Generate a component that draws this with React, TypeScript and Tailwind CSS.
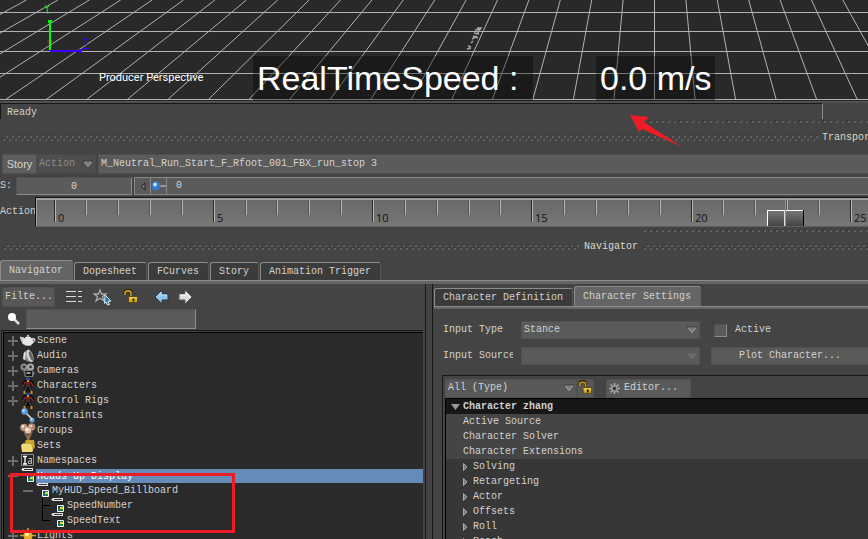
import type { ReactNode } from 'react'
import clsx from 'clsx'

const sceneRows = [
  { label: 'Scene', icon: 'teapot', depth: 0, toggle: 'plus' },
  { label: 'Audio', icon: 'audio', depth: 0, toggle: 'plus' },
  { label: 'Cameras', icon: 'camera', depth: 0, toggle: 'plus' },
  { label: 'Characters', icon: 'character', depth: 0, toggle: 'plus' },
  { label: 'Control Rigs', icon: 'character', depth: 0, toggle: 'plus' },
  { label: 'Constraints', icon: 'constraint', depth: 0 },
  { label: 'Groups', icon: 'group', depth: 0 },
  { label: 'Sets', icon: 'set', depth: 0 },
  { label: 'Namespaces', icon: 'namespace', depth: 0, toggle: 'plus' },
  { label: 'Heads Up Display', icon: 'hud', depth: 0, toggle: 'minus', selected: true },
  { label: 'MyHUD_Speed_Billboard', icon: 'hud', depth: 1, toggle: 'minus' },
  { label: 'SpeedNumber', icon: 'hud', depth: 2 },
  { label: 'SpeedText', icon: 'hud', depth: 2 },
  { label: 'Lights', icon: 'light', depth: 0, toggle: 'plus' }
]

const indents = ['w-1', 'w-[19px]', 'w-[34px]']

const icons: Record<string, ReactNode> = {
  teapot: (
    <>
      <path d="M0 4l4 1 1 6-2 0zM12 5.500c4-1 4 3 0 5" fill="#d8d8d8" stroke="#c8c8c8" />
      <path d="M12.500 6.500c2 0 1 2 0 2.500z" fill="#2a2a2a" />
      <ellipse cx="8" cy="8.5" rx="5" ry="4.5" fill="#e6e6e6" />
      <path d="M4 11c2 2 6 2 8 0l-1 2H5z" fill="#8c8c8c" />
      <path d="M5 5c1-2 5-2 6 0z" fill="#fff" />
      <circle cx="8" cy="2.8" r="1" fill="#ddd" />
    </>
  ),
  audio: (
    <>
      <path d="M3 11l1-7 5-3 4 11-4 2z" fill="#8a8a8a" />
      <ellipse cx="10" cy="8" rx="3" ry="6.4" fill="#d9d9d9" transform="rotate(-20 10 8)" />
      <ellipse cx="11" cy="8" rx="1.6" ry="5" fill="#666" transform="rotate(-20 11 8)" />
      <path d="M3 11l1-7 2 1-1 7z" fill="#ddd" />
    </>
  ),
  camera: (
    <>
      <circle cx="4" cy="4" r="3.6" fill="#8b8b8b" />
      <circle cx="10.5" cy="4" r="3.6" fill="#aaa" />
      <circle cx="4" cy="4" r="1.4" fill="#333" />
      <circle cx="10.5" cy="4" r="1.4" fill="#333" />
      <path d="M3 7h9l3 3-2 4H5z" fill="#777" />
      <path d="M5 8h7v5H6z" fill="#111" />
      <path d="M6.500 9h4v2h-4z" fill="#999" />
    </>
  ),
  character: (
    <>
      <path d="M8 3v6M3 7l2-3h6l2 3M7 9l-2 5M9 9l2 5" fill="none" stroke="#0c0c0c" strokeWidth="3.500" />
      <path d="M6 4h4v5H6z" fill="#5b2222" />
      <path d="M3 8l2-3.500h6L13 8" fill="none" stroke="#8c2424" strokeWidth="1.300" />
      <path d="M6.500 9.500l-2 4M9.500 9.500l2 4" fill="none" stroke="#484848" strokeWidth="1.500" />
      <path d="M6.500 0h3v2.500h-3z" fill="#2447e0" />
      <path d="M7 2h2v2H7zM3.500 13h2v3h-2zM10.500 13h2v3h-2z" fill="#d08a1c" />
    </>
  ),
  constraint: (
    <>
      <path d="M5 4l7 7" stroke="#ddd" strokeWidth="1.6" />
      <circle cx="4.500" cy="3.500" r="3.2" fill="#5c9fdd" />
      <circle cx="3.500" cy="2.500" r="1.3" fill="#bfe0fa" />
      <circle cx="12" cy="12" r="2.6" fill="#5c9fdd" />
      <circle cx="11.500" cy="11.300" r="1" fill="#d2eafc" />
    </>
  ),
  group: (
    <>
      <circle cx="4" cy="4.500" r="3.800" fill="#b8937a" />
      <circle cx="11.500" cy="4" r="3.800" fill="#b08a70" />
      <path d="M3 8l5 4 5-4-3 8H7z" fill="#8a6750" />
      <circle cx="8" cy="7.500" r="3.300" fill="#dcc0aa" />
      <circle cx="7" cy="6.500" r="1.400" fill="#fff3e6" />
      <circle cx="3" cy="3.500" r="1.400" fill="#f5dfd0" />
      <circle cx="11" cy="3" r="1.300" fill="#f0d8c6" />
    </>
  ),
  set: (
    <>
      <path d="M5 3l3-2 2 1h4l1 7-3 4H6z" fill="#c9a533" />
      <path d="M1 7l3-2 2 1h5l2 7-1 1H2z" fill="#f2d977" />
    </>
  ),
  namespace: (
    <>
      <path d="M1.500 1.500h12v11h-12z" fill="#242424" stroke="#8d8d8d" />
      <path d="M3 3.500h4M5 3.500v7M3 11h4" stroke="#fff" strokeWidth="1.300" fill="none" />
      <path d="M8.500 5.500h3v5h-3v-2.500h3" stroke="#bbb" fill="none" />
    </>
  ),
  hud: (
    <>
      <path d="M1 1.500L3 0h10v3H3z" fill="#e6e6e6" />
      <path d="M4 1.500h8" stroke="#333" />
      <path d="M7.500 7.500h6v6h-6z" fill="#159326" stroke="#fff" />
      <path d="M8 8h3v2H8z" fill="#1b3cb8" />
      <path d="M10 9h3v2h-3z" fill="#e6d933" />
      <path d="M8 11h2v2H8z" fill="#275db5" />
    </>
  ),
  light: (
    <>
      <path d="M8 0v15M0 7.500h16M2.500 2l11 11M13.500 2l-11 11" stroke="#d99b1a" strokeWidth="1.600" />
      <circle cx="8" cy="7.500" r="4.500" fill="#e5ad28" />
      <circle cx="7" cy="6.500" r="2" fill="#fff2a8" />
    </>
  )
}

const groups = ['Solving', 'Retargeting', 'Actor', 'Offsets', 'Roll', 'Reach']

function Grid() {
  const spokes = Array.from({ length: 81 }, (_, i) => i - 40)
  return (
    <svg className="block w-full h-[101px]" aria-hidden="true">
      <g stroke="#b2b2b2" fill="none">
        {spokes.map((n) => (
          <line key={n} x1={654.5 + n * 31.4} y1="0" x2={654.5 + n * 40.6} y2="100" />
        ))}
        {[12.5, 31.5, 51.5, 73.5, 99.5].map((y) => (
          <line key={y} x1="0" y1={y} x2="100%" y2={y} shapeRendering="crispEdges" />
        ))}
      </g>
      <path d="M467 49l4-1M468 46l3 1M471 43l2-2M472 39l5-3M473 36l5 2M474 33l5 1M475 30l6-1M477 28h5M478 33l2-5" stroke="#a8a8a8" strokeWidth="1.500" />
      <path d="M50 20v30" stroke="#0f0" strokeWidth="2" />
      <path d="M48 20h4v3h-4z" fill="#0f0" />
      <path d="M45 5l2 3 2-2M47 8l1 6" stroke="#0f0" fill="none" />
      <path d="M48 40v3M51.500 40v3" stroke="#e01010" />
      <path d="M50 51h32" stroke="#3c00ff" strokeWidth="2" />
      <path d="M79 49h3v4h-3z" fill="#3c00ff" />
      <path d="M82.500 39.500h6M83 40l5 7M82 48.500h7" stroke="#3c00ff" fill="none" />
    </svg>
  )
}

function Grip({ id, double }: { id: string; double?: boolean }) {
  return (
    <svg className={clsx('block w-full', double ? 'h-[6px]' : 'h-[3px]')} aria-hidden="true">
      <pattern id={id} width="6" height="6" patternUnits="userSpaceOnUse">
        <path d="M3 0h2v2H3zM0 3h2v2H0z" fill="#383838" />
        <path d="M4 1h2v2H4zM1 4h2v2H1z" fill="#606060" />
      </pattern>
      <rect width="100%" height="100%" fill={`url(#${id})`} />
    </svg>
  )
}

function Chevron({ dim }: { dim?: boolean }) {
  return (
    <svg className="pointer-events-none absolute right-[3px] top-1/2 -translate-y-1/2" width="10" height="7" aria-hidden="true">
      <path d="M1 1h8L5 6z" fill={dim ? '#666' : '#777'} stroke={dim ? '#777' : '#aaa'} />
      <path d="M0 .500h10" stroke={dim ? '#555' : '#222'} />
    </svg>
  )
}

function Lock() {
  return (
    <svg width="16" height="16" viewBox="0 0 16 16" aria-hidden="true">
      <path d="M2 6V4c0-4 6-4 6 0v4" fill="none" stroke="#2d2205" strokeWidth="3" />
      <path d="M2 6V4c0-3 6-3 6 0v4" fill="none" stroke="#d7a91e" strokeWidth="1.500" />
      <path d="M5.500 7.500h9v6h-9z" fill="#d5ad22" stroke="#5d4508" />
      <path d="M6 8h8v2H6z" fill="#ebcb4d" />
      <path d="M9.500 9.500h2v3h-2z" fill="#332500" />
    </svg>
  )
}

function Ruler() {
  const ticks = Array.from({ length: 27 }, (_, i) => ({ n: i, x: Math.round(18.5 + i * 31.85) }))
  return (
    <div className="relative flex-1 h-[30px] border-t border-l border-[#111] border-b border-b-[#606060] bg-linear-to-b from-[#686868] to-[#777]">
      <svg className="block w-full h-full" aria-hidden="true">
        <path d="M.500 0v30" stroke="#a0a0a0" />
        <rect width="100%" height="2" fill="#a0a0a0" />
        {ticks.map(({ n, x }) => (
          <g key={n} shapeRendering="crispEdges">
            <rect x={x - 1} y="2" width="1" height={n % 5 ? 15 : 22} fill={n % 5 ? '#555' : '#2b2b2b'} />
            <rect x={x} y="2" width="1" height={n % 5 ? 15 : 22} fill="#b5b5b5" />
            {n % 5 === 0 && (
              <text x={x + 3} y="24" fill="#111" className="text-[11px] font-['Open_Sans',sans-serif]">
                {n}
              </text>
            )}
          </g>
        ))}
        <defs>
          <linearGradient id="thumb" x1="0" y1="0" x2="0" y2="1">
            <stop offset="0" stopColor="#777" />
            <stop offset="1" stopColor="#444" />
          </linearGradient>
        </defs>
        <g shapeRendering="crispEdges">
          <rect x="731" y="12" width="37" height="17" fill="#000" />
          <rect x="731" y="12" width="36" height="16" fill="#fff" />
          <rect x="732" y="13" width="35" height="15" fill="url(#thumb)" />
          <rect x="748" y="13" width="1" height="15" fill="#ddd" />
          <rect x="749" y="0" width="1" height="28" fill="#20e020" />
        </g>
      </svg>
    </div>
  )
}

function Tab({ label, active }: { label: string; active?: boolean }) {
  return (
    <button
      type="button"
      role="tab"
      aria-selected={!!active}
      className={clsx(
        'rounded-t-[3px] border-t border-l',
        active
          ? 'h-5 pl-2 pr-[10px] border-[#8c8c8c] bg-[#656565]'
          : 'h-[18px] pl-2 pr-[9px] border-[#8c8c8c] border-r border-r-[#555] bg-[#3b3b3b]'
      )}
    >
      {label}
    </button>
  )
}

function Navigator() {
  return (
    <section className="flex-1 min-w-0 flex flex-col border-r border-[#181818]">
      <div className="flex items-center h-[23px] mt-px pl-[2px] shrink-0">
        <button type="button" className="w-[53px] h-5 text-left pl-[2px] bg-[#585858] border border-[#4e4e4e]">Filte...</button>
        <button type="button" aria-label="List" className="ml-[10px]">
          <svg width="18" height="14" aria-hidden="true">
            <path d="M1 1.500h10M13 1.500h4M1 6.500h10M13 6.500h4M1 11.500h10M13 11.500h4" stroke="#ddd" />
          </svg>
        </button>
        <button type="button" aria-label="Favorites" className="ml-[10px]">
          <svg width="20" height="18" aria-hidden="true">
            <path d="M7 2l1.500 4H13l-3.500 2.500L11 13l-4-2.700L3 13l1.500-4.500L1 6h4.500z" fill="#444" stroke="#aaa" strokeWidth="1.300" />
            <path d="M12 7l6 6-3 .500 1.500 3-2 .500-1.500-3-1.500 1.500z" fill="#2681a8" stroke="#d6edf5" />
          </svg>
        </button>
        <button type="button" aria-label="Lock selection" className="ml-[10px]"><Lock /></button>
        <button type="button" aria-label="Back" className="ml-[15px]">
          <svg width="15" height="16" aria-hidden="true">
            <path d="M1 8l7-7v4h6v6H8v4z" fill="#8cc4ed" stroke="#25394a" />
            <path d="M2.500 8L7 3.500V6h6" fill="none" stroke="#c5e5fa" />
          </svg>
        </button>
        <button type="button" aria-label="Forward" className="ml-[9px]">
          <svg width="15" height="16" aria-hidden="true">
            <path d="M14 8L7 1v4H1v6h6v4z" fill="#ddd" stroke="#555" />
            <path d="M12.500 8L8 3.500V6H2" fill="none" stroke="#fff" />
          </svg>
        </button>
      </div>
      <div className="flex items-center h-[21px] pl-[7px] shrink-0">
        <label htmlFor="find" aria-label="Find" className="w-[19px]">
          <svg width="14" height="14" aria-hidden="true">
            <path d="M7 7l5 5" stroke="#ddd" strokeWidth="2.500" />
            <circle cx="5" cy="5" r="4" fill="#fff" />
          </svg>
        </label>
        <input id="find" className="w-[170px] h-5 px-1 bg-[#5a5a5a] border border-[#505050] border-r-[#8c8c8c] border-b-[#8c8c8c] outline-none" />
      </div>
      <div className="flex-1 min-h-0 mt-px ml-px mr-[2px] border-t border-l border-[#181818] pt-px pl-px">
        <ul className="h-full overflow-hidden border-t border-l border-black bg-[#2a2a2a]">
          {sceneRows.map((row) => (
            <li key={row.label} className="relative flex items-center h-[15px]">
              <span className={clsx('shrink-0', indents[row.depth])} />
              <span className="w-3 shrink-0">
                {row.toggle && (
                  <svg width="11" height="11" className="block" aria-hidden="true">
                    <path d={row.toggle === 'plus' ? 'M0 6h10M5 1v10' : 'M0 6h10'} stroke="#6c6c6c" strokeWidth="2" />
                  </svg>
                )}
                {row.depth === 2 && (
                  <svg width="12" height="15" className="block" aria-hidden="true">
                    <path d={row.label === 'SpeedText' ? 'M4.500 0v7.500H12' : 'M4.500 0v15M4.500 7.500H12'} stroke="#000" fill="none" />
                  </svg>
                )}
              </span>
              <svg width="16" height="16" viewBox="0 0 16 16" className="shrink-0" aria-hidden="true">
                {icons[row.icon]}
              </svg>
              <span className={clsx('flex-1 pl-px leading-[15px]', row.selected && 'h-[14px] bg-[#658bb8] text-white')}>{row.label}</span>
            </li>
          ))}
        </ul>
      </div>
    </section>
  )
}

function CharacterSettings() {
  return (
    <section className="w-[calc(50%+2px)] min-w-0 ml-[6px] pl-px flex flex-col border-l border-[#181818]">
      <div role="tablist" className="flex items-end gap-px mt-[2px] border-b border-[#8c8c8c] shrink-0">
        <Tab label="Character Definition" />
        <Tab label="Character Settings" active />
      </div>
      <div className="h-[2px] shrink-0 bg-[#656565]" />
      <div className="flex items-center h-[18px] mt-3 pl-[9px] shrink-0">
        <label htmlFor="input-type" className="w-[78px]">Input Type</label>
        <div className="relative">
          <select id="input-type" className="appearance-none block w-[179px] h-[18px] pl-[2px] bg-[#5a5a5a] border border-[#515151]">
            <option>Stance</option>
          </select>
          <Chevron />
        </div>
        <label className="flex items-center ml-[14px] gap-2">
          <input type="checkbox" className="appearance-none size-[13px] bg-[#5a5a5a] border border-[#515151] border-r-[#8c8c8c] border-b-[#8c8c8c]" />
          Active
        </label>
      </div>
      <div className="flex items-center h-[18px] mt-2 pl-[9px] shrink-0">
        <label htmlFor="input-source" className="w-[70px] mr-2 overflow-hidden whitespace-nowrap">Input Source</label>
        <div className="relative mr-[11px]">
          <select id="input-source" disabled className="appearance-none block w-[179px] h-[18px] bg-[#5a5a5a] border border-[#515151]" />
          <Chevron dim />
        </div>
        <button type="button" className="flex-1 h-[18px] bg-[#5a5a5a] border border-r-0 border-[#515151]">Plot Character...</button>
      </div>
      <div className="flex-1 min-h-0 mt-[10px] ml-2 pl-[2px] border-t border-l border-[#181818] flex flex-col">
        <div className="flex items-center h-5 mt-[2px] shrink-0">
          <div className="relative">
            <select aria-label="Property filter" className="appearance-none block w-[132px] h-[19px] pl-[2px] bg-[#585858] border border-[#515151]">
              <option>All (Type)</option>
            </select>
            <Chevron />
          </div>
          <button type="button" aria-label="Lock character" className="flex items-center justify-center w-[17px] h-[19px] bg-[#585858] border border-[#515151]"><Lock /></button>
          <button type="button" className="flex items-center gap-1 ml-3 pl-[2px] w-[85px] h-[19px] bg-[#5a5a5a] border border-[#515151]">
            <svg width="11" height="11" viewBox="0 0 11 11" aria-hidden="true">
              <path d="M5.500 0v11M0 5.500h11M1.500 1.500l8 8M9.500 1.500l-8 8" stroke="#aaa" strokeWidth="1.500" />
              <circle cx="5.500" cy="5.500" r="3.300" fill="#999" />
              <circle cx="5.500" cy="5.500" r="1.700" fill="#333" />
            </svg>
            Editor...
          </button>
        </div>
        <div className="flex-1 min-h-0 overflow-hidden border-t border-l border-black bg-[#373737] leading-[15px]">
          <h2 className="flex items-center h-[15px] pl-[5px] gap-[3px] bg-[#171717] font-bold">
            <svg width="9" height="6" aria-hidden="true"><path d="M0 0h9L4.500 6z" fill="#999" /></svg>
            Character zhang
          </h2>
          <ul className="bg-[#454545] pl-[17px]">
            <li>Active Source</li>
            <li>Character Solver</li>
            <li>Character Extensions</li>
          </ul>
          <ul className="pl-[17px]">
            {groups.map((group) => (
              <li key={group} className="flex items-center gap-[5px]">
                <svg width="5" height="8" aria-hidden="true"><path d="M.500.500v7L4 4z" fill="#777" stroke="#aaa" /></svg>
                {group}
              </li>
            ))}
          </ul>
        </div>
      </div>
    </section>
  )
}

export default function App() {
  return (
    <main className="relative h-screen overflow-hidden flex flex-col bg-[#444] text-[#d2d2d2] text-[10px] leading-3 font-['Liberation_Mono',monospace]">
      <section className="relative shrink-0 overflow-hidden bg-[#292929] border-b-2 border-[#505050]">
        <Grid />
        <p className="absolute left-[99px] top-[70px] text-[11px] leading-4 text-white font-['Roboto',sans-serif]">Producer Perspective</p>
        <div className="absolute left-[253px] top-14 flex gap-[63px] text-[34px] leading-[45px] text-white whitespace-nowrap font-['Liberation_Sans',sans-serif]">
          <span className="w-[280px] pl-1 bg-black/35">RealTimeSpeed :</span>
          <span className="w-[119px] pl-1 bg-black/35">0.0 m/s</span>
        </div>
      </section>

      <div className="flex shrink-0 h-4">
        <div role="status" className="w-[823px] border-t border-l border-[#181818] border-r border-r-[#8c8c8c] pl-[6px] pt-[3px]">Ready</div>
      </div>
      <div className="shrink-0 pl-[646px] mt-px"><Grip id="g1" /></div>
      <div className="shrink-0 flex items-center h-[14px] mt-2 pl-[2px] gap-1">
        <div className="w-[816px] shrink-0"><Grip id="g2" double /></div>
        <h2 className="whitespace-nowrap text-[#d8d8c8]">Transport</h2>
      </div>

      <div className="shrink-0 flex h-5 mt-[9px] pl-[2px]">
        <button type="button" className="w-[35px] bg-[#5e5e5e] border border-[#505050] text-[11px] font-['Liberation_Sans',sans-serif]">Story</button>
        <div className="relative">
          <select aria-label="Track type" disabled className="appearance-none block w-[59px] h-5 pl-px bg-[#4e4e4e] border border-[#484848] text-[#8c8c8c]">
            <option>Action</option>
          </select>
          <Chevron />
        </div>
        <input aria-label="Take" defaultValue="M_Neutral_Run_Start_F_Rfoot_001_FBX_run_stop 3" className="flex-1 min-w-0 ml-[2px] pl-[2px] bg-[#5b5b5b] border border-r-0 border-[#505050] outline-none" />
      </div>

      <div className="shrink-0 flex items-center h-[18px] mt-[3px]">
        <label htmlFor="start" className="w-4">S:</label>
        <input id="start" defaultValue="0" className="w-[116px] h-[18px] text-center bg-[#5b5b5b] border border-[#505050] border-r-[#8c8c8c] border-b-[#8c8c8c] outline-none" />
        <div className="flex flex-1 h-[18px] ml-[2px] border border-r-0 border-[#888] bg-[#5b5b5b]">
          <button type="button" aria-label="Step back" className="flex items-center justify-center w-4 border-r border-[#888]">
            <svg width="6" height="9" aria-hidden="true"><path d="M5 1v7L1 4.500z" fill="#777" stroke="#222" /></svg>
          </button>
          <button type="button" aria-label="Key" className="flex items-center justify-center w-4 border-r border-[#888]">
            <svg width="15" height="12" aria-hidden="true">
              <path d="M8 6h7" stroke="#aaa" strokeWidth="1.500" />
              <circle cx="5" cy="6" r="4.500" fill="#357cc5" />
              <circle cx="4" cy="4.500" r="2" fill="#bfdfff" />
            </svg>
          </button>
          <input aria-label="Frame" defaultValue="0" className="flex-1 min-w-0 pl-[9px] outline-none" />
        </div>
      </div>

      <div className="shrink-0 flex items-center mt-[2px]">
        <span className="w-[35px] overflow-hidden">Action</span>
        <Ruler />
      </div>

      <div className="shrink-0 pl-[640px] mt-[2px]"><Grip id="g3" /></div>
      <div className="shrink-0 flex items-center h-[14px] mt-2 pl-[3px] gap-[5px]">
        <div className="w-[576px] shrink-0"><Grip id="g4" double /></div>
        <h2 className="text-[#d8d8c8]">Navigator</h2>
        <div className="flex-1"><Grip id="g5" double /></div>
      </div>

      <div role="tablist" className="shrink-0 flex items-end gap-px mt-[6px] border-b border-[#8c8c8c]">
        <Tab label="Navigator" active />
        <Tab label="Dopesheet" />
        <Tab label="FCurves" />
        <Tab label="Story" />
        <Tab label="Animation Trigger" />
      </div>
      <div className="shrink-0 h-[3px] bg-[#656565]" />

      <div className="flex-1 min-h-0 flex">
        <Navigator />
        <CharacterSettings />
      </div>

      {/* Callouts */}
      <svg className="absolute left-[629px] top-[114px]" width="55" height="36" aria-hidden="true">
        <path d="M1 1l19 2-5 5 38 25-40-18-3 3z" fill="#ee1c25" />
      </svg>
      <div className="absolute left-[10px] top-[473px] w-[225px] h-[60px] border-[3px] border-[#ee1c25]" />
    </main>
  )
}
